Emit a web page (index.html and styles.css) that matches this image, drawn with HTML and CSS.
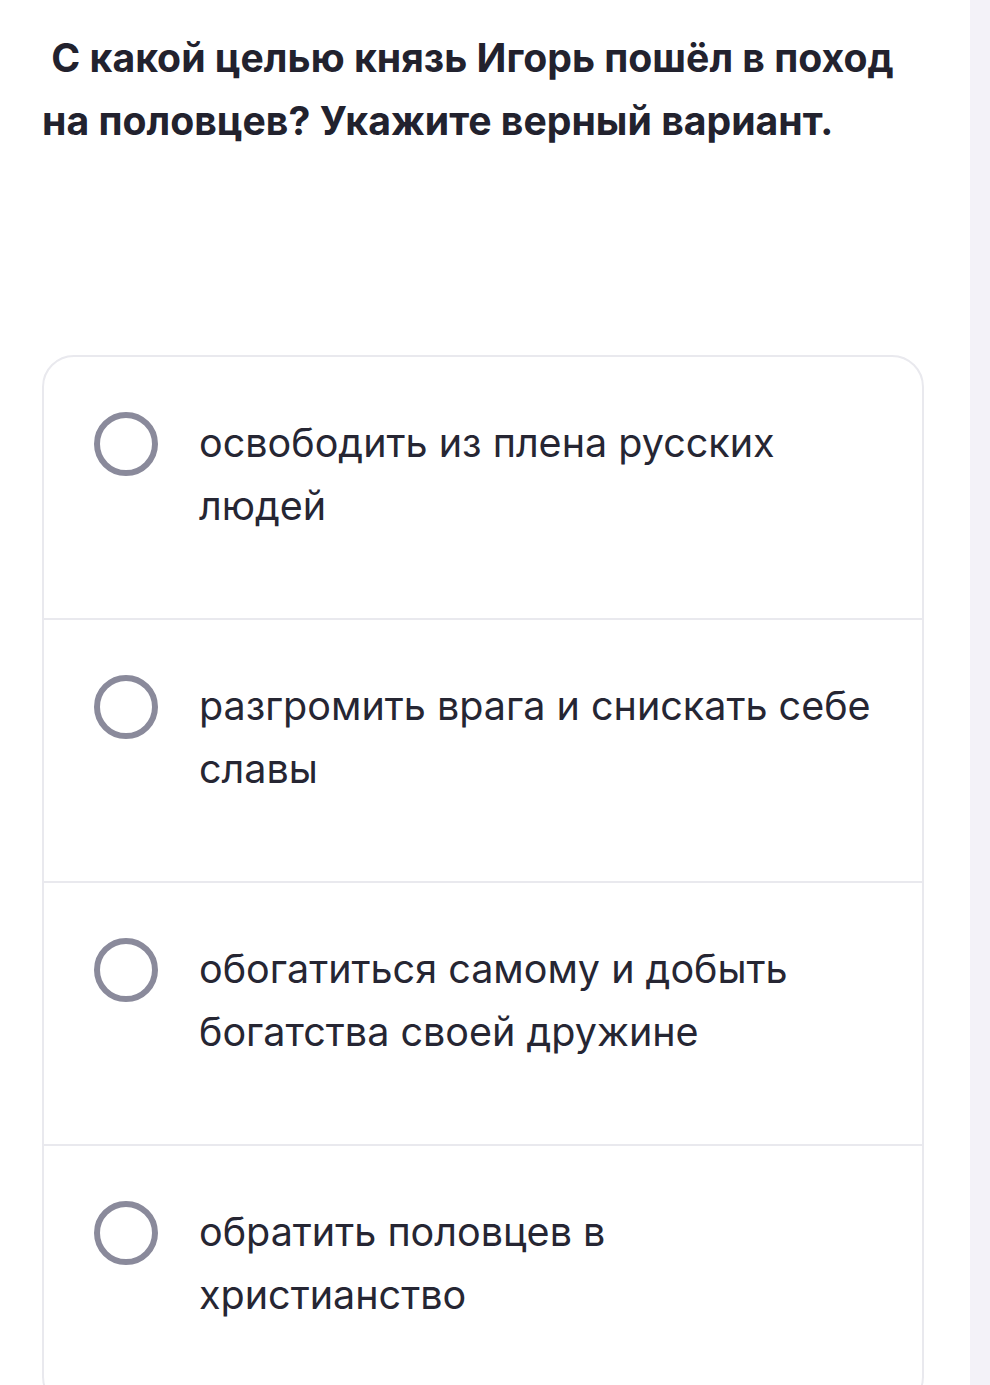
FILE: index.html
```html
<!DOCTYPE html>
<html lang="ru">
<head>
    <meta charset="UTF-8">
    <meta name="viewport" content="width=device-width, initial-scale=1.0">
    <title>Вопрос</title>
    <link rel="stylesheet" href="styles.css">
</head>
<body>
    <div class="page">
        <main class="content">
            <h2 class="question">&nbsp;С какой целью князь Игорь пошёл в поход на половцев? Укажите верный вариант.</h2>

            <div class="answers">
                <label class="answer">
                    <span class="radio"></span>
                    <span class="answer-text">освободить из плена русских людей</span>
                </label>
                <label class="answer">
                    <span class="radio"></span>
                    <span class="answer-text">разгромить врага и снискать себе славы</span>
                </label>
                <label class="answer">
                    <span class="radio"></span>
                    <span class="answer-text">обогатиться самому и добыть богатства своей дружине</span>
                </label>
                <label class="answer">
                    <span class="radio"></span>
                    <span class="answer-text">обратить половцев в христианство</span>
                </label>
            </div>
        </main>
        <aside class="side"></aside>
    </div>
</body>
</html>
```

FILE: styles.css
```css
:root {
    --text: #262633;
    --border: #e9e9ee;
    --radio: #8a8a9b;
}

* {
    box-sizing: border-box;
    margin: 0;
    padding: 0;
}

body {
    font-family: Inter, "Noto Sans", sans-serif;
    background: #fff;
    color: var(--text);
}

.page {
    display: flex;
    min-height: 100vh;
}

.content {
    flex: 1;
    padding: 26px 46px 0 42px;
}

.side {
    width: 20px;
    background: #f3f2f8;
}

.question {
    font-size: 39.2px;
    font-weight: 700;
    line-height: 63px;
    color: #22222e;
    width: 880px;
    margin-bottom: 203px;
}

.answers {
    border: 2px solid var(--border);
    border-radius: 32px;
    width: 882px;
}

.answer {
    display: flex;
    align-items: flex-start;
    gap: 41px;
    padding: 55px 30px 80px 50px;
    border-bottom: 2px solid var(--border);
    cursor: pointer;
}

.answer:last-child {
    border-bottom: none;
}

.radio {
    flex: none;
    width: 64px;
    height: 64px;
    border: 6px solid var(--radio);
    border-radius: 50%;
}

.answer-text {
    font-size: 39.5px;
    line-height: 63px;
    max-width: 678px;
}
```
